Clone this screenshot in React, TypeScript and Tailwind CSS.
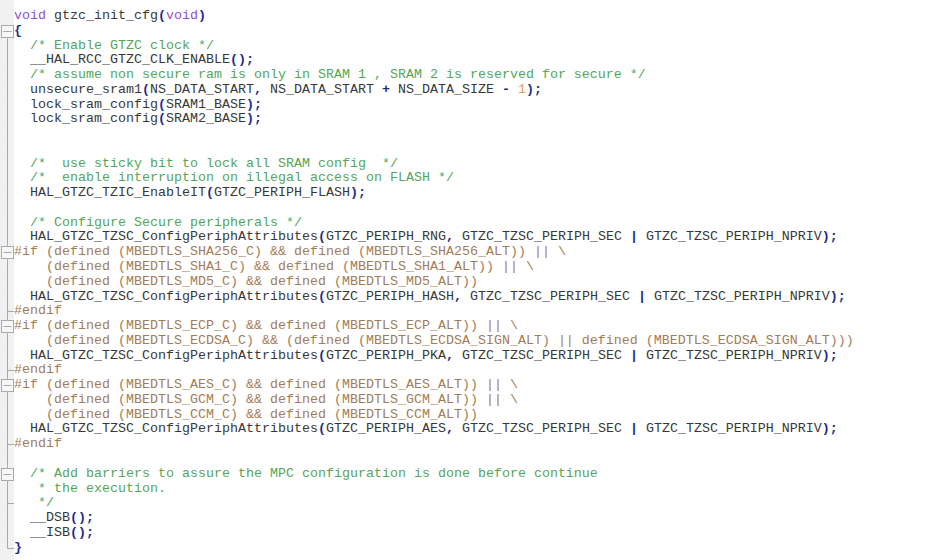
import React from "react";

type Kind = "c" | "cm" | "pp";
type Fold = "none" | "start" | "box" | "line" | "tee" | "end";

const LINES: { t: string; k: Kind; f: Fold }[] = [
  { t: "void gtzc_init_cfg(void)", k: "c", f: "none" },
  { t: "{", k: "c", f: "start" },
  { t: "  /* Enable GTZC clock */", k: "cm", f: "line" },
  { t: "  __HAL_RCC_GTZC_CLK_ENABLE();", k: "c", f: "line" },
  { t: "  /* assume non secure ram is only in SRAM 1 , SRAM 2 is reserved for secure */", k: "cm", f: "line" },
  { t: "  unsecure_sram1(NS_DATA_START, NS_DATA_START + NS_DATA_SIZE - 1);", k: "c", f: "line" },
  { t: "  lock_sram_config(SRAM1_BASE);", k: "c", f: "line" },
  { t: "  lock_sram_config(SRAM2_BASE);", k: "c", f: "line" },
  { t: "", k: "c", f: "line" },
  { t: "", k: "c", f: "line" },
  { t: "  /*  use sticky bit to lock all SRAM config  */", k: "cm", f: "line" },
  { t: "  /*  enable interruption on illegal access on FLASH */", k: "cm", f: "line" },
  { t: "  HAL_GTZC_TZIC_EnableIT(GTZC_PERIPH_FLASH);", k: "c", f: "line" },
  { t: "", k: "c", f: "line" },
  { t: "  /* Configure Secure peripherals */", k: "cm", f: "line" },
  { t: "  HAL_GTZC_TZSC_ConfigPeriphAttributes(GTZC_PERIPH_RNG, GTZC_TZSC_PERIPH_SEC | GTZC_TZSC_PERIPH_NPRIV);", k: "c", f: "line" },
  { t: "#if (defined (MBEDTLS_SHA256_C) && defined (MBEDTLS_SHA256_ALT)) || \\", k: "pp", f: "box" },
  { t: "    (defined (MBEDTLS_SHA1_C) && defined (MBEDTLS_SHA1_ALT)) || \\", k: "pp", f: "line" },
  { t: "    (defined (MBEDTLS_MD5_C) && defined (MBEDTLS_MD5_ALT))", k: "pp", f: "line" },
  { t: "  HAL_GTZC_TZSC_ConfigPeriphAttributes(GTZC_PERIPH_HASH, GTZC_TZSC_PERIPH_SEC | GTZC_TZSC_PERIPH_NPRIV);", k: "c", f: "line" },
  { t: "#endif", k: "pp", f: "tee" },
  { t: "#if (defined (MBEDTLS_ECP_C) && defined (MBEDTLS_ECP_ALT)) || \\", k: "pp", f: "box" },
  { t: "    (defined (MBEDTLS_ECDSA_C) && (defined (MBEDTLS_ECDSA_SIGN_ALT) || defined (MBEDTLS_ECDSA_SIGN_ALT)))", k: "pp", f: "line" },
  { t: "  HAL_GTZC_TZSC_ConfigPeriphAttributes(GTZC_PERIPH_PKA, GTZC_TZSC_PERIPH_SEC | GTZC_TZSC_PERIPH_NPRIV);", k: "c", f: "line" },
  { t: "#endif", k: "pp", f: "tee" },
  { t: "#if (defined (MBEDTLS_AES_C) && defined (MBEDTLS_AES_ALT)) || \\", k: "pp", f: "box" },
  { t: "    (defined (MBEDTLS_GCM_C) && defined (MBEDTLS_GCM_ALT)) || \\", k: "pp", f: "line" },
  { t: "    (defined (MBEDTLS_CCM_C) && defined (MBEDTLS_CCM_ALT))", k: "pp", f: "line" },
  { t: "  HAL_GTZC_TZSC_ConfigPeriphAttributes(GTZC_PERIPH_AES, GTZC_TZSC_PERIPH_SEC | GTZC_TZSC_PERIPH_NPRIV);", k: "c", f: "line" },
  { t: "#endif", k: "pp", f: "tee" },
  { t: "", k: "c", f: "line" },
  { t: "  /* Add barriers to assure the MPC configuration is done before continue", k: "cm", f: "box" },
  { t: "   * the execution.", k: "cm", f: "line" },
  { t: "   */", k: "cm", f: "tee" },
  { t: "  __DSB();", k: "c", f: "line" },
  { t: "  __ISB();", k: "c", f: "line" },
  { t: "}", k: "c", f: "end" },
];

function tokens(s: string) {
  const parts = s.match(/(\s+|[A-Za-z_][A-Za-z0-9_]*|\d+|.)/g) || [];
  return parts.map((p, i) => {
    if (p === "void")
      return (
        <span key={i} className="text-[#9050cc]">
          {p}
        </span>
      );
    if (/^\d+$/.test(p))
      return (
        <span key={i} className="text-[#f29a45]">
          {p}
        </span>
      );
    if (/^[(){};,+\-|]$/.test(p))
      return (
        <span key={i} className="font-bold text-[#1d2a8a]">
          {p}
        </span>
      );
    return <span key={i}>{p}</span>;
  });
}

function FoldMark({ f }: { f: Fold }) {
  const stroke = "#a9a9a9";
  return (
    <svg width="14" height="14.78" viewBox="0 0 14 14.78" className="block overflow-visible">
      {(f === "box" || f === "line" || f === "tee") && (
        <line x1="7.5" y1="0" x2="7.5" y2="14.78" stroke={stroke} strokeWidth="1" />
      )}
      {f === "start" && <line x1="7.5" y1="7.4" x2="7.5" y2="14.78" stroke={stroke} strokeWidth="1" />}
      {f === "end" && <line x1="7.5" y1="0" x2="7.5" y2="7.5" stroke={stroke} strokeWidth="1" />}
      {(f === "tee" || f === "end") && (
        <line x1="7.5" y1="7.5" x2="14" y2="7.5" stroke={stroke} strokeWidth="1" />
      )}
      {(f === "start" || f === "box") && (
        <g>
          <rect x="1.5" y="1.5" width="12" height="12" fill="#f7f7f7" stroke={stroke} strokeWidth="1" />
          <line x1="3.5" y1="7.5" x2="11.5" y2="7.5" stroke={stroke} strokeWidth="1" />
        </g>
      )}
    </svg>
  );
}

export default function App() {
  return (
    <div className="flex h-[560px] w-[950px] overflow-hidden bg-white">
      <div className="flex w-full flex-col">
        <div className="h-[9px] w-[14px] shrink-0 bg-[#f1f1f1]" />
        {LINES.map((l, i) => (
          <div key={i} className="flex h-[14.78px] shrink-0">
            <div className="w-[14px] shrink-0 bg-[#f1f1f1]">
              <FoldMark f={l.f} />
            </div>
            <div
              className={
                "whitespace-pre pl-0 text-[13.33px] leading-[14.78px] " +
                (l.k === "cm"
                  ? "text-[#56a656]"
                  : l.k === "pp"
                  ? "text-[#a27c57]"
                  : "text-[#383838]")
              }
              style={{ fontFamily: '"Liberation Mono", "Courier New", monospace' }}
            >
              {l.k === "c" ? tokens(l.t) : l.t}
            </div>
          </div>
        ))}
        <div className="w-[14px] flex-1 bg-[#f1f1f1]" />
      </div>
    </div>
  );
}
